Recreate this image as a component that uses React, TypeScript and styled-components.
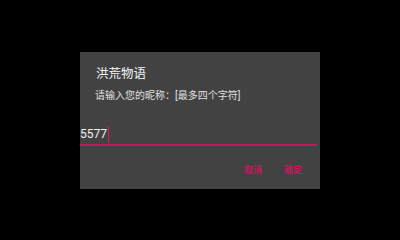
import React from 'react';
import styled, { createGlobalStyle } from 'styled-components';

const GlobalStyle = createGlobalStyle`
  html, body {
    margin: 0;
    padding: 0;
    background: #000;
  }
  #root {
    width: 400px;
    height: 240px;
  }
`;

const Screen = styled.div`
  width: 400px;
  height: 240px;
  background: #000;
  display: flex;
  align-items: center;
  justify-content: center;
  font-family: Roboto, "Noto Sans CJK SC", sans-serif;
`;

const Dialog = styled.div`
  width: 240px;
  height: 137px;
  box-sizing: border-box;
  background: #424242;
  padding-top: 14px;
  display: flex;
  flex-direction: column;
`;

const Title = styled.div`
  padding-left: 16px;
  font-size: 12.5px;
  line-height: 16px;
  color: #f4f4f4;
`;

const Message = styled.div`
  margin-top: 7px;
  padding-left: 15px;
  font-size: 10px;
  line-height: 14px;
  color: #e0e0e0;
`;

const InputRow = styled.div`
  margin-top: 22px;
  margin-right: 3px;
  height: 19px;
  border-bottom: 2px solid #c2185b;
  display: flex;
  align-items: center;
  font-size: 12px;
  line-height: 19px;
  color: #f0f0f0;
`;

const Caret = styled.span`
  flex: none;
  width: 1px;
  height: 17px;
  margin-left: 1px;
  background: #d81b60;
`;

const Actions = styled.div`
  margin-top: 18px;
  padding-right: 18px;
  display: flex;
  justify-content: flex-end;
  gap: 22px;
`;

const ActionButton = styled.span`
  font-size: 9px;
  line-height: 12px;
  font-weight: 700;
  color: #c2185b;
`;

const App: React.FC = () => {
  return (
    <Screen>
      <GlobalStyle />
      <Dialog>
        <Title>洪荒物语</Title>
        <Message>请输入您的昵称：[最多四个字符]</Message>
        <InputRow>
          5577
          <Caret />
        </InputRow>
        <Actions>
          <ActionButton>取消</ActionButton>
          <ActionButton>确定</ActionButton>
        </Actions>
      </Dialog>
    </Screen>
  );
};

export default App;
